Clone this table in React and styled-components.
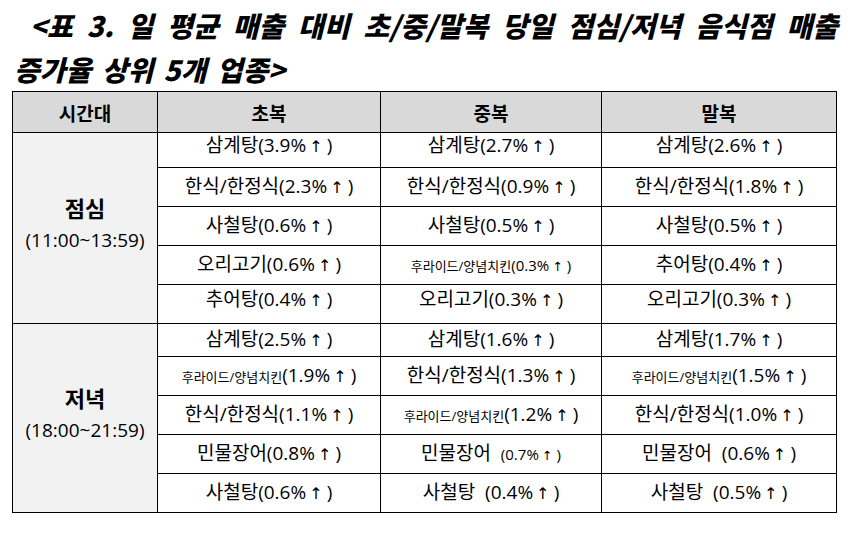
import React from 'react';
import styled, { createGlobalStyle } from 'styled-components';

const GlobalStyle = createGlobalStyle`
  html, body {
    margin: 0;
    padding: 0;
    background: #ffffff;
  }
  body {
    font-family: "Open Sans", "Noto Sans CJK KR", sans-serif;
    color: #000000;
  }
`;

const Page = styled.div`
  width: 855px;
  height: 556px;
  padding: 4px 0 0 12px;
  box-sizing: border-box;
  overflow: hidden;
`;

const Title = styled.div`
  width: 826px;
  font-family: "Noto Sans CJK KR", sans-serif;
  font-size: 28px;
  line-height: 43.5px;
  font-weight: 900;
  font-style: italic;
`;

const TitleLine = styled.div`
  text-align: ${p => (p.$justify ? 'justify' : 'left')};
  text-align-last: ${p => (p.$justify ? 'justify' : 'left')};
  padding-left: ${p => (p.$justify ? '18px' : '2px')};
  word-spacing: ${p => (p.$justify ? '0' : '4px')};
  white-space: nowrap;
`;

const Table = styled.table`
  width: 824px;
  border-collapse: collapse;
  table-layout: fixed;
  font-size: 19px;
`;

const HeadCell = styled.th`
  background: #d9d9d9;
  border: 1px solid #000;
  height: 40px;
  padding: 0;
  font-family: "Noto Sans CJK KR", sans-serif;
  font-size: 19px;
  font-weight: 700;
  text-align: center;
  vertical-align: middle;
`;

const GroupCell = styled.td`
  background: #f2f2f2;
  border: 1px solid #000;
  text-align: center;
  vertical-align: middle;
  padding: 0 0 12px;
`;

const GroupName = styled.div`
  font-family: "Noto Sans CJK KR", sans-serif;
  font-size: 22px;
  font-weight: 700;
  line-height: 30px;
  margin-bottom: 6px;
`;

const GroupTime = styled.div`
  font-size: 19px;
  line-height: 24px;
`;

const Row = styled.tr`
  height: ${p => (p.$first ? '33px' : '39px')};
`;

const Cell = styled.td`
  border: 1px solid #000;
  text-align: center;
  vertical-align: middle;
  padding: ${p => (p.$lift ? '0 0 8px' : '0')};
  white-space: nowrap;
  line-height: 24px;
`;

const Sized = styled.span`
  font-size: ${p => p.$size}px;
`;

const Arrow = styled.span`
  font-family: "DejaVu Sans", sans-serif;
  font-size: 0.85em;
  margin: 0 4px 0 3px;
`;

const Value = ({ v, size }) => (
  <Sized $size={size || 19}>({v}%<Arrow>↑</Arrow>)</Sized>
);

// each entry: [name, value, nameSize?, valueSize?, gap?]
const groups = [
  {
    name: '점심',
    time: '(11:00~13:59)',
    lift: [true, false, false, false, true],
    rows: [
      [['삼계탕', '3.9'], ['삼계탕', '2.7'], ['삼계탕', '2.6']],
      [['한식/한정식', '2.3'], ['한식/한정식', '0.9'], ['한식/한정식', '1.8']],
      [['사철탕', '0.6'], ['사철탕', '0.5'], ['사철탕', '0.5']],
      [['오리고기', '0.6'], ['후라이드/양념치킨', '0.3', 13, 15], ['추어탕', '0.4']],
      [['추어탕', '0.4'], ['오리고기', '0.3'], ['오리고기', '0.3']],
    ],
  },
  {
    name: '저녁',
    time: '(18:00~21:59)',
    lift: [false, false, false, false, false],
    rows: [
      [['삼계탕', '2.5'], ['삼계탕', '1.6'], ['삼계탕', '1.7']],
      [['후라이드/양념치킨', '1.9', 13], ['한식/한정식', '1.3'], ['후라이드/양념치킨', '1.5', 13]],
      [['한식/한정식', '1.1'], ['후라이드/양념치킨', '1.2', 13], ['한식/한정식', '1.0']],
      [['민물장어', '0.8'], ['민물장어', '0.7', null, 15, true], ['민물장어', '0.6', null, null, true]],
      [['사철탕', '0.6'], ['사철탕', '0.4', null, null, true], ['사철탕', '0.5', null, null, true]],
    ],
  },
];

const Entry = ({ item }) => {
  const [name, v, nameSize, valueSize, gap] = item;
  return (
    <>
      <Sized $size={nameSize || 19}>{name}</Sized>
      {gap ? '\u00a0 ' : ''}
      <Value v={v} size={valueSize} />
    </>
  );
};

export default function App() {
  return (
    <Page>
      <GlobalStyle />
      <Title>
        <TitleLine $justify>
          &lt;표 3. 일 평균 매출 대비 초/중/말복 당일 점심/저녁 음식점 매출
        </TitleLine>
        <TitleLine>증가율 상위 5개 업종&gt;</TitleLine>
      </Title>
      <Table>
        <colgroup>
          <col style={{ width: 145 }} />
          <col style={{ width: 223 }} />
          <col style={{ width: 221 }} />
          <col style={{ width: 235 }} />
        </colgroup>
        <thead>
          <tr>
            <HeadCell>시간대</HeadCell>
            <HeadCell>초복</HeadCell>
            <HeadCell>중복</HeadCell>
            <HeadCell>말복</HeadCell>
          </tr>
        </thead>
        <tbody>
          {groups.map(g =>
            g.rows.map((r, i) => (
              <Row key={g.name + i} $first={i === 0}>
                {i === 0 && (
                  <GroupCell rowSpan={5}>
                    <GroupName>{g.name}</GroupName>
                    <GroupTime>{g.time}</GroupTime>
                  </GroupCell>
                )}
                {r.map((item, j) => (
                  <Cell key={j} $lift={g.lift[i]}>
                    <Entry item={item} />
                  </Cell>
                ))}
              </Row>
            ))
          )}
        </tbody>
      </Table>
    </Page>
  );
}
